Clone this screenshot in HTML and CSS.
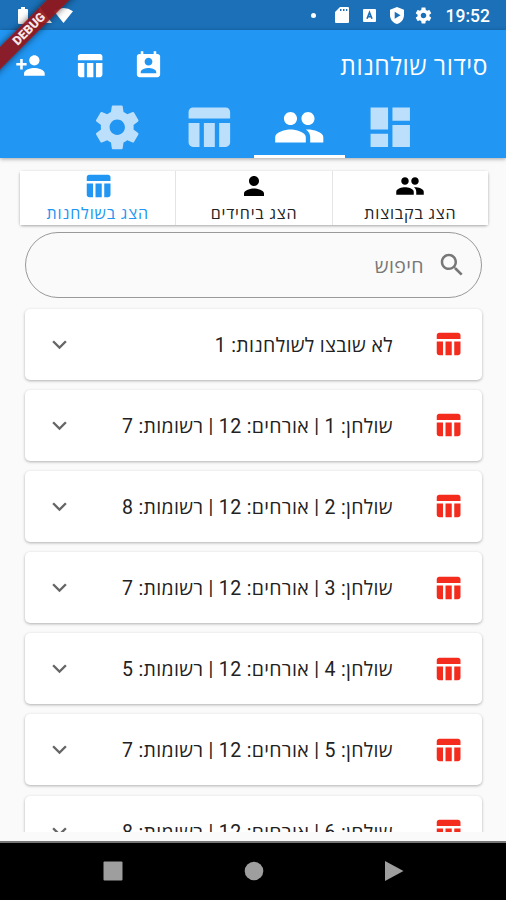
FILE: index.html
```html
<!DOCTYPE html>
<html lang="he" dir="rtl">
<head>
<meta charset="utf-8">
<title>סידור שולחנות</title>
<link rel="stylesheet" href="styles.css">
</head>
<body>
<svg class="defs" aria-hidden="true">
  <symbol id="table" viewBox="0 0 24 24"><path d="M10 10.02h5V21h-5zM17 21h3c1.1 0 2-.9 2-2v-9h-5v11zm3-18H5c-1.1 0-2 .9-2 2v3h19V5c0-1.1-.9-2-2-2zM3 19c0 1.1.9 2 2 2h3V10H3v9z"/></symbol>
  <symbol id="group" viewBox="0 0 24 24"><path d="M16 11c1.66 0 2.99-1.34 2.99-3S17.66 5 16 5s-3 1.34-3 3 1.34 3 3 3zm-8 0c1.66 0 2.99-1.34 2.99-3S9.66 5 8 5 5 6.34 5 8s1.34 3 3 3zm0 2c-2.33 0-7 1.17-7 3.5V19h14v-2.5c0-2.33-4.67-3.5-7-3.5zm8 0c-.29 0-.62.02-.97.05 1.16.84 1.97 1.97 1.97 3.45V19h6v-2.5c0-2.33-4.67-3.5-7-3.5z"/></symbol>
  <symbol id="person" viewBox="0 0 24 24"><path d="M12 12c2.21 0 4-1.79 4-4s-1.79-4-4-4-4 1.79-4 4 1.79 4 4 4zm0 2c-2.67 0-8 1.34-8 4v2h16v-2c0-2.66-5.33-4-8-4z"/></symbol>
  <symbol id="person-add" viewBox="0 0 24 24"><path d="M15 12c2.21 0 4-1.79 4-4s-1.79-4-4-4-4 1.79-4 4 1.79 4 4 4zm-9-2V7H4v3H1v2h3v3h2v-3h3v-2H6zm9 4c-2.67 0-8 1.34-8 4v2h16v-2c0-2.66-5.33-4-8-4z"/></symbol>
  <symbol id="contact" viewBox="0 0 24 24"><path d="M19 3h-1V1h-2v2H8V1H6v2H5c-1.11 0-2 .9-2 2v14c0 1.1.89 2 2 2h14c1.1 0 2-.9 2-2V5c0-1.1-.9-2-2-2zm-7 3c1.66 0 3 1.34 3 3s-1.34 3-3 3-3-1.34-3-3 1.34-3 3-3zm6 12H6v-1c0-2 4-3.1 6-3.1s6 1.1 6 3.1v1z"/></symbol>
  <symbol id="dashboard" viewBox="0 0 24 24"><path d="M3 13h8V3H3v10zm0 8h8v-6H3v6zm10 0h8V11h-8v10zm0-18v6h8V3h-8z"/></symbol>
  <symbol id="gear" viewBox="0 0 24 24"><path d="M19.43 12.98c.04-.32.07-.64.07-.98s-.03-.66-.07-.98l2.11-1.65c.19-.15.24-.42.12-.64l-2-3.46c-.12-.22-.39-.3-.61-.22l-2.49 1c-.52-.4-1.08-.73-1.69-.98l-.38-2.65C14.46 2.18 14.25 2 14 2h-4c-.25 0-.46.18-.49.42l-.38 2.65c-.61.25-1.17.59-1.69.98l-2.49-1c-.23-.09-.49 0-.61.22l-2 3.46c-.13.22-.07.49.12.64l2.11 1.65c-.04.32-.07.65-.07.98s.03.66.07.98l-2.11 1.65c-.19.15-.24.42-.12.64l2 3.46c.12.22.39.3.61.22l2.49-1c.52.4 1.08.73 1.69.98l.38 2.65c.03.24.24.42.49.42h4c.25 0 .46-.18.49-.42l.38-2.65c.61-.25 1.17-.59 1.69-.98l2.49 1c.23.09.49 0 .61-.22l2-3.46c.12-.22.07-.49-.12-.64l-2.11-1.65zM12 15.5c-1.93 0-3.5-1.57-3.5-3.5s1.57-3.5 3.5-3.5 3.5 1.57 3.5 3.5-1.57 3.5-3.5 3.5z"/></symbol>
  <symbol id="search" viewBox="0 0 24 24"><path d="M15.5 14h-.79l-.28-.27C15.41 12.59 16 11.11 16 9.5 16 5.91 13.09 3 9.5 3S3 5.91 3 9.5 5.91 16 9.5 16c1.61 0 3.09-.59 4.23-1.57l.27.28v.79l5 4.99L20.49 19l-4.99-5zm-6 0C7.01 14 5 11.99 5 9.5S7.01 5 9.5 5 14 7.01 14 9.5 11.99 14 9.5 14z"/></symbol>
  <symbol id="chevron" viewBox="0 0 24 24"><path d="M16.59 8.59 12 13.17 7.41 8.59 6 10l6 6 6-6z"/></symbol>
</svg>

<div class="screen">
  <div class="status" dir="ltr">
    <div class="status-left">
      <svg class="battery" viewBox="0 0 10 17"><path d="M3 0h4v2h2q1 0 1 1v13q0 1-1 1H1q-1 0-1-1V3q0-1 1-1h2z"/></svg>
      <svg class="signal" viewBox="0 0 16 16"><path d="M16 16H0L4 0z"/></svg>
      <svg class="wifi" viewBox="0 0 19 15"><path d="M0 3.200Q9.500-3.200 19 3.200L9.500 15z"/></svg>
    </div>
    <div class="status-right">
      <span class="dot"></span>
      <svg class="sd" viewBox="0 0 14 16"><path fill-rule="evenodd" d="M5 0h8q1 0 1 1v14q0 1-1 1H1q-1 0-1-1V5zM5 2v2h1.500V2zM8 2v2h1.500V2zM11 2v2h1.300V2z"/></svg>
      <svg class="akey" viewBox="0 0 13 13"><path d="M1 0h11q1 0 1 1v11q0 1-1 1H1q-1 0-1-1V1q0-1 1-1z"/><path class="akey-mark" d="M4 9.800 6.500 3.500 9 9.800M5 7.600h3"/></svg>
      <svg class="shield" viewBox="0 0 14 17"><path fill-rule="evenodd" d="M7 0 14 2.800V8c0 4.300-2.800 7.800-7 9C2.800 15.800 0 12.300 0 8V2.800zM4.700 4.800v7L10.500 8.300z"/></svg>
      <svg class="cog"><use href="#gear"/></svg>
      <span class="clock">19:52</span>
    </div>
  </div>

  <header class="appbar">
    <div class="toolbar">
      <h1 class="title">סידור שולחנות</h1>
      <div class="actions">
        <svg><use href="#contact"/></svg>
        <svg><use href="#table"/></svg>
        <svg><use href="#person-add"/></svg>
      </div>
    </div>
    <nav class="tabs">
      <div class="tab"><svg><use href="#dashboard"/></svg></div>
      <div class="tab active"><svg><use href="#group"/></svg></div>
      <div class="tab"><svg><use href="#table"/></svg></div>
      <div class="tab"><svg><use href="#gear"/></svg></div>
    </nav>
  </header>

  <main class="content">
    <div class="segments">
      <div class="segment"><svg><use href="#group"/></svg><span>הצג בקבוצות</span></div>
      <div class="segment"><svg><use href="#person"/></svg><span>הצג ביחידים</span></div>
      <div class="segment selected"><svg><use href="#table"/></svg><span>הצג בשולחנות</span></div>
    </div>
    <div class="search"><svg><use href="#search"/></svg><span>חיפוש</span></div>
    <div class="list">
      <div class="card"><svg class="table-icon"><use href="#table"/></svg><span class="label">לא שובצו לשולחנות: 1</span><svg class="chevron"><use href="#chevron"/></svg></div>
      <div class="card"><svg class="table-icon"><use href="#table"/></svg><span class="label">שולחן: 1 | אורחים: 12 | רשומות: 7</span><svg class="chevron"><use href="#chevron"/></svg></div>
      <div class="card"><svg class="table-icon"><use href="#table"/></svg><span class="label">שולחן: 2 | אורחים: 12 | רשומות: 8</span><svg class="chevron"><use href="#chevron"/></svg></div>
      <div class="card"><svg class="table-icon"><use href="#table"/></svg><span class="label">שולחן: 3 | אורחים: 12 | רשומות: 7</span><svg class="chevron"><use href="#chevron"/></svg></div>
      <div class="card"><svg class="table-icon"><use href="#table"/></svg><span class="label">שולחן: 4 | אורחים: 12 | רשומות: 5</span><svg class="chevron"><use href="#chevron"/></svg></div>
      <div class="card"><svg class="table-icon"><use href="#table"/></svg><span class="label">שולחן: 5 | אורחים: 12 | רשומות: 7</span><svg class="chevron"><use href="#chevron"/></svg></div>
      <div class="card"><svg class="table-icon"><use href="#table"/></svg><span class="label">שולחן: 6 | אורחים: 12 | רשומות: 8</span><svg class="chevron"><use href="#chevron"/></svg></div>
    </div>
  </main>

  <footer class="navbar" dir="ltr">
    <svg viewBox="0 0 20 20"><rect x=".5" y=".5" width="19" height="19" rx="1"/></svg>
    <svg viewBox="0 0 20 20"><circle cx="10" cy="10" r="9.300"/></svg>
    <svg viewBox="0 0 20 20"><path d="M1 0 19.500 10 1 20z"/></svg>
  </footer>

  <div class="debug" dir="ltr"><span>DEBUG</span></div>
</div>
</body>
</html>
```
FILE: styles.css
```css
* { box-sizing: border-box; }
body {
  margin: 0;
  font-family: Roboto, "Open Sans", "Noto Sans", "Liberation Sans", sans-serif;
}
svg { display: block; fill: currentColor; flex: none; }
.defs { display: none; }

.screen {
  position: relative;
  width: 506px;
  height: 900px;
  overflow: hidden;
  display: flex;
  flex-direction: column;
  background: #fafafa;
}

.status {
  height: 30px;
  flex: none;
  display: flex;
  justify-content: space-between;
  padding: 0 16px 0 18px;
  background: #1b70b7;
  color: #fff;
}
.status-left, .status-right { display: flex; align-items: center; }
.battery { width: 10px; height: 17px; }
.signal { width: 16px; height: 16px; margin-left: 8px; }
.wifi { width: 19px; height: 15px; margin-left: 2px; }
.dot { width: 5px; height: 5px; border-radius: 50%; background: #fff; margin-right: 19px; }
.sd { width: 14px; height: 16px; margin-right: 14px; }
.akey { width: 13px; height: 13px; margin-right: 14px; }
.akey-mark { fill: none; stroke: #1b70b7; stroke-width: 1.6; }
.shield { width: 14px; height: 17px; margin-right: 10px; }
.cog { width: 19px; height: 19px; margin-right: 13px; }
.clock { font-size: 17.500px; font-weight: 500; line-height: 30px; padding-top: 2px; }

.appbar {
  height: 127.500px;
  flex: none;
  display: flex;
  flex-direction: column;
  background: #2196f3;
  color: #fff;
  box-shadow: 0 1px 4px rgba(0, 0, 0, .35);
}
.toolbar {
  height: 70px;
  flex: none;
  display: flex;
  align-items: center;
  justify-content: space-between;
  padding: 0 18px 0 15px;
}
.title {
  margin: 0;
  padding-top: 3px;
  font-size: 24.500px;
  font-weight: 400;
  line-height: 34px;
  letter-spacing: .55px;
}
.actions { display: flex; gap: 28px; }
.actions svg { width: 31px; height: 31px; }
.tabs { flex: 1; display: flex; padding-right: 70px; }
.tab {
  width: 91.200px;
  display: flex;
  justify-content: center;
  border-bottom: 3px solid transparent;
  color: rgba(255, 255, 255, .7);
}
.tab svg { width: 52.500px; height: 52.500px; margin-top: 1px; }
.tab.active { color: #fff; border-color: #fff; }

.content {
  flex: 1;
  min-height: 0;
  display: flex;
  flex-direction: column;
  padding: 13px 18px 9px 20px;
}
.segments {
  display: flex;
  height: 54px;
  flex: none;
  gap: 1px;
  background: #e4e4e4;
  border-radius: 3px;
  box-shadow: 0 1px 3px rgba(0, 0, 0, .35);
}
.segment {
  flex: 1;
  display: flex;
  flex-direction: column;
  align-items: center;
  background: #fff;
  color: #222;
  font-size: 16px;
  line-height: 25px;
  letter-spacing: .85px;
}
.segment svg { width: 30px; height: 30px; fill: #000; }
.segment.selected, .segment.selected svg { color: #2196f3; fill: #2196f3; }

.search {
  height: 66px;
  flex: none;
  margin: 7.500px 6px 0 5px;
  padding-right: 14px;
  display: flex;
  align-items: center;
  gap: 13px;
  border: 1px solid #999;
  border-radius: 33px;
  color: #777;
  font-size: 19.500px;
  letter-spacing: .4px;
}
.search svg { width: 30px; height: 30px; }

.list {
  flex: 1;
  min-height: 0;
  overflow: hidden;
  display: flex;
  flex-direction: column;
  gap: 10.200px;
  margin: 0 1px 0 0;
  padding: 10.500px 5px 0;
}
.card {
  height: 71px;
  flex: none;
  display: flex;
  align-items: center;
  padding: 0 19px 0 20px;
  background: #fff;
  border-radius: 5px;
  box-shadow: 0 1px 3px rgba(0, 0, 0, .3);
  color: #222;
  font-size: 19.500px;
}
.table-icon { width: 30px; height: 30px; color: #f32c1e; }
.label { flex: 1; margin-right: 40px; white-space: nowrap; letter-spacing: .34px; }
.chevron { width: 29px; height: 29px; color: #666; }

.navbar {
  height: 59px;
  flex: none;
  display: flex;
  align-items: center;
  justify-content: center;
  gap: 120.500px;
  padding: 0 0 2px 1px;
  background: #000;
  border-top: 2px solid #777;
  color: #9e9e9e;
}
.navbar svg { width: 20px; height: 20px; }

.debug {
  position: absolute;
  left: -61px;
  top: 21px;
  width: 180px;
  height: 15.500px;
  transform: rotate(-45deg);
  display: flex;
  align-items: center;
  justify-content: center;
  background: rgba(145, 20, 26, .93);
  box-shadow: 0 0 7px rgba(0, 0, 0, .6);
  color: #f5e6e8;
  font-size: 12.500px;
  font-weight: 900;
}
```
